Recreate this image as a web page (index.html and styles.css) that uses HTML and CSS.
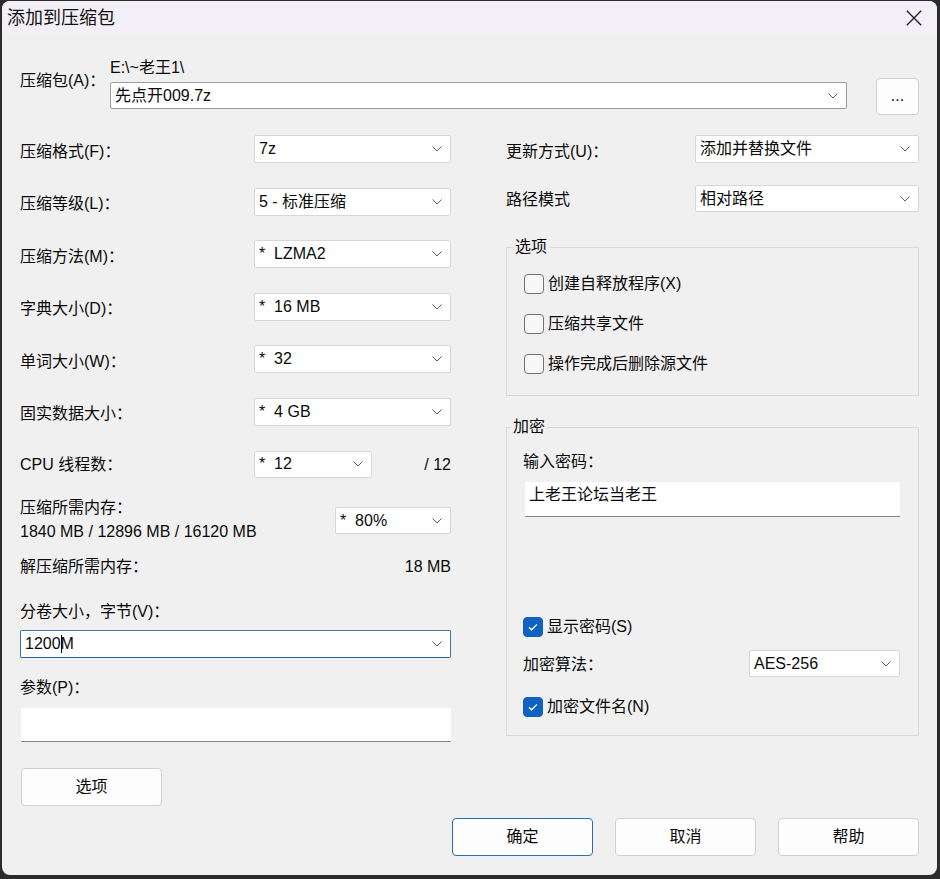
FILE: index.html
```html
<!DOCTYPE html>
<html lang="zh-CN">
<head>
<meta charset="utf-8">
<title>添加到压缩包</title>
<link rel="stylesheet" href="styles.css">
</head>
<body>
<div class="window">
  <div class="titlebar">
    <span class="title">添加到压缩包</span>
    <svg class="close" width="16" height="16" viewBox="0 0 16 16"><path d="M0.8 0.8 L15.2 15.2 M15.2 0.8 L0.8 15.2" stroke="#1a1a1a" stroke-width="1.3" fill="none"/></svg>
  </div>

  <div class="top">
    <div class="top-label">压缩包(A)：</div>
    <div class="top-main">
      <div class="path">E:\~老王1\</div>
      <div class="combo archive"><span class="val">先点开009.7z</span><svg class="chev" width="10" height="6" viewBox="0 0 10 6"><path d="M0.5 0.5 L5 5 L9.5 0.5" stroke="#5c5c5c" stroke-width="1" fill="none"/></svg></div>
    </div>
    <div class="btn browse">...</div>
  </div>

  <div class="columns">
    <div class="left">
      <div class="frow"><span class="lbl">压缩格式(F)：</span><div class="combo w197"><span class="val">7z</span><svg class="chev" width="10" height="6" viewBox="0 0 10 6"><path d="M0.5 0.5 L5 5 L9.5 0.5" stroke="#5c5c5c" stroke-width="1" fill="none"/></svg></div></div>
      <div class="frow"><span class="lbl">压缩等级(L)：</span><div class="combo w197"><span class="val">5 - 标准压缩</span><svg class="chev" width="10" height="6" viewBox="0 0 10 6"><path d="M0.5 0.5 L5 5 L9.5 0.5" stroke="#5c5c5c" stroke-width="1" fill="none"/></svg></div></div>
      <div class="frow"><span class="lbl">压缩方法(M)：</span><div class="combo w197"><span class="val">*  LZMA2</span><svg class="chev" width="10" height="6" viewBox="0 0 10 6"><path d="M0.5 0.5 L5 5 L9.5 0.5" stroke="#5c5c5c" stroke-width="1" fill="none"/></svg></div></div>
      <div class="frow"><span class="lbl">字典大小(D)：</span><div class="combo w197"><span class="val">*  16 MB</span><svg class="chev" width="10" height="6" viewBox="0 0 10 6"><path d="M0.5 0.5 L5 5 L9.5 0.5" stroke="#5c5c5c" stroke-width="1" fill="none"/></svg></div></div>
      <div class="frow"><span class="lbl">单词大小(W)：</span><div class="combo w197"><span class="val">*  32</span><svg class="chev" width="10" height="6" viewBox="0 0 10 6"><path d="M0.5 0.5 L5 5 L9.5 0.5" stroke="#5c5c5c" stroke-width="1" fill="none"/></svg></div></div>
      <div class="frow"><span class="lbl">固实数据大小：</span><div class="combo w197"><span class="val">*  4 GB</span><svg class="chev" width="10" height="6" viewBox="0 0 10 6"><path d="M0.5 0.5 L5 5 L9.5 0.5" stroke="#5c5c5c" stroke-width="1" fill="none"/></svg></div></div>
      <div class="frow cpu"><span class="lbl">CPU 线程数：</span><div class="combo w118"><span class="val">*  12</span><svg class="chev" width="10" height="6" viewBox="0 0 10 6"><path d="M0.5 0.5 L5 5 L9.5 0.5" stroke="#5c5c5c" stroke-width="1" fill="none"/></svg></div><span class="rval">/ 12</span></div>

      <div class="mem">
        <div class="mem-text">
          <div class="line">压缩所需内存：</div>
          <div class="line second">1840 MB / 12896 MB / 16120 MB</div>
        </div>
        <div class="combo w116 memcombo"><span class="val">*  80%</span><svg class="chev" width="10" height="6" viewBox="0 0 10 6"><path d="M0.5 0.5 L5 5 L9.5 0.5" stroke="#5c5c5c" stroke-width="1" fill="none"/></svg></div>
      </div>

      <div class="decomp"><span>解压缩所需内存：</span><span>18 MB</span></div>

      <div class="line vol-label">分卷大小，字节(V)：</div>
      <div class="combo focus vol"><span class="val">1200<span class="caret"></span>M</span><svg class="chev" width="10" height="6" viewBox="0 0 10 6"><path d="M0.5 0.5 L5 5 L9.5 0.5" stroke="#5c5c5c" stroke-width="1" fill="none"/></svg></div>

      <div class="line param-label">参数(P)：</div>
      <div class="textbox param"></div>

      <div class="btn opts">选项</div>
    </div>

    <div class="right">
      <div class="frow r1"><span class="rlbl">更新方式(U)：</span><div class="combo w224"><span class="val">添加并替换文件</span><svg class="chev" width="10" height="6" viewBox="0 0 10 6"><path d="M0.5 0.5 L5 5 L9.5 0.5" stroke="#5c5c5c" stroke-width="1" fill="none"/></svg></div></div>
      <div class="frow r2"><span class="rlbl">路径模式</span><div class="combo w224"><span class="val">相对路径</span><svg class="chev" width="10" height="6" viewBox="0 0 10 6"><path d="M0.5 0.5 L5 5 L9.5 0.5" stroke="#5c5c5c" stroke-width="1" fill="none"/></svg></div></div>

      <fieldset class="group options">
        <legend>选项</legend>
        <div class="gbody">
          <div class="check"><span class="box"></span><span>创建自释放程序(X)</span></div>
          <div class="check"><span class="box"></span><span>压缩共享文件</span></div>
          <div class="check"><span class="box"></span><span>操作完成后删除源文件</span></div>
        </div>
      </fieldset>

      <fieldset class="group enc">
        <legend>加密</legend>
        <div class="gbody">
          <div class="line">输入密码：</div>
          <div class="textbox pw">上老王论坛当老王</div>
          <div class="check checked showpw"><span class="box"><svg width="20" height="20" viewBox="0 0 20 20"><path d="M6 10.3 L8.6 12.8 L14 7.4" stroke="#fff" stroke-width="1.3" fill="none"/></svg></span><span>显示密码(S)</span></div>
          <div class="algo"><span class="algo-lbl">加密算法：</span><div class="combo w152"><span class="val">AES-256</span><svg class="chev" width="10" height="6" viewBox="0 0 10 6"><path d="M0.5 0.5 L5 5 L9.5 0.5" stroke="#5c5c5c" stroke-width="1" fill="none"/></svg></div></div>
          <div class="check checked encname"><span class="box"><svg width="20" height="20" viewBox="0 0 20 20"><path d="M6 10.3 L8.6 12.8 L14 7.4" stroke="#fff" stroke-width="1.3" fill="none"/></svg></span><span>加密文件名(N)</span></div>
        </div>
      </fieldset>
    </div>
  </div>

  <div class="footer">
    <div class="btn default">确定</div>
    <div class="btn">取消</div>
    <div class="btn">帮助</div>
  </div>
</div>
</body>
</html>
```

FILE: styles.css
```css
html, body {
  margin: 0;
  padding: 0;
  background: #2b2b2b;
}

body {
  font-family: "Liberation Sans", "Noto Sans CJK SC", sans-serif;
  font-size: 16px;
  color: #0a0a0a;
  line-height: 18px;
}

.window {
  margin: 1px 3px 0 2px;
  height: 874px;
  background: #f0f0f0;
  border-radius: 8px;
  overflow: hidden;
}

.titlebar {
  height: 34px;
  background: #f3eff7;
  display: flex;
  align-items: center;
  justify-content: space-between;
  padding-left: 5px;
}

.title {
  font-size: 18px;
  line-height: 22px;
  color: #111;
}

.close {
  margin-right: 15px;
}

/* top archive row */
.top {
  display: flex;
  padding: 0 18px;
  margin-top: 24px;
}

.top-label {
  width: 90px;
  padding-top: 13px;
}

.top-main {
  flex: 1;
}

.path {
  height: 18px;
}

.combo {
  box-sizing: border-box;
  height: 28px;
  background: #fff;
  border: 1px solid #d7d7d7;
  border-radius: 2px;
  display: flex;
  align-items: center;
  justify-content: space-between;
  padding: 0 8px 0 4px;
}

.combo .val {
  white-space: pre;
}

.chev {
  flex: none;
}

.archive {
  margin-top: 5px;
  height: 27px;
  border-color: #9c9c9c;
}

.btn {
  box-sizing: border-box;
  width: 141px;
  height: 38px;
  background: #fdfdfd;
  border: 1px solid #d0d0d0;
  border-radius: 4px;
  display: flex;
  align-items: center;
  justify-content: center;
}

.browse {
  width: 43px;
  height: 37px;
  margin-left: 29px;
  margin-top: 19px;
  padding-bottom: 2px;
}

/* columns */
.columns {
  display: flex;
  gap: 55px;
  padding: 0 18px;
  margin-top: 20px;
}

.left {
  width: 431px;
}

.right {
  width: 413px;
}

.frow {
  display: flex;
  align-items: center;
  height: 28px;
  margin-bottom: 24.5px;
}

.lbl {
  width: 234px;
  flex: none;
  margin-top: 5px;
}

.cpu .lbl {
  margin-top: 2px;
}

.w197 { width: 197px; }
.w118 { width: 118px; }
.w116 { width: 116px; }
.w224 { width: 224px; }
.w152 { width: 152px; }

.cpu {
  margin-bottom: 0;
}

.cpu .combo {
  height: 27px;
}

.rval {
  margin-left: auto;
  margin-top: 2px;
}

.mem {
  display: flex;
  justify-content: space-between;
  margin-top: 21px;
}

.line {
  height: 18px;
}

.mem-text .second {
  margin-top: 6px;
}

.memcombo {
  margin-top: 8px;
  height: 27px;
}

.decomp {
  display: flex;
  justify-content: space-between;
  margin-top: 17px;
}

.vol-label {
  margin-top: 27px;
}

.vol {
  margin-top: 9px;
  border-color: #3a74b8;
  border-bottom-color: #245f9f;
}

.caret {
  display: inline-block;
  width: 1px;
  height: 18px;
  background: #000;
  vertical-align: -4px;
  margin-right: -1px;
}

.param-label {
  margin-top: 21px;
}

.textbox {
  box-sizing: border-box;
  background: #fff;
  border-bottom: 1px solid #868686;
  border-radius: 2px 2px 0 0;
}

.param {
  margin-top: 11px;
  margin-left: 1px;
  height: 34px;
}

.opts {
  margin-top: 26px;
  margin-left: 1px;
}

/* right column */
.rlbl {
  width: 189px;
  flex: none;
  margin-top: 5px;
}

.r2 .rlbl {
  margin-top: 3px;
}

.r1 {
  margin-bottom: 22px;
}

.r2 {
  margin-bottom: 0;
  height: 27px;
}

.r2 .combo {
  height: 27px;
}

.group {
  margin: 0;
  padding: 0;
  border: 1px solid #dadada;
  min-width: 0;
}

.group legend {
  padding: 0 2px;
  line-height: 18px;
}

.options {
  margin-top: 26px;
}

.options legend {
  margin-left: 6px;
}

.options .gbody {
  padding: 18px 0 21px 17px;
}

.check {
  display: flex;
  align-items: center;
  gap: 4px;
  height: 20px;
}

.options .check + .check {
  margin-top: 20px;
}

.box {
  box-sizing: border-box;
  width: 20px;
  height: 20px;
  border: 1px solid #727272;
  border-radius: 4px;
  background: #f7f7f7;
  flex: none;
  display: block;
}

.box svg {
  display: block;
  margin: -1px;
}

.checked .box {
  background: #0f62c0;
  border-color: #0f62c0;
}

.enc {
  margin-top: 22px;
}

.enc legend {
  margin-left: 4px;
}

.enc .gbody {
  padding: 17px 18px 18px 16px;
}

.pw {
  margin-top: 11px;
  margin-left: 2px;
  height: 35px;
  padding: 4px 0 0 4px;
}

.showpw {
  margin-top: 100px;
}

.algo {
  display: flex;
  align-items: center;
  margin-top: 13px;
  height: 27px;
}

.algo-lbl {
  width: 226px;
  flex: none;
  margin-top: 3px;
}

.algo .combo {
  height: 27px;
}

.encname {
  margin-top: 20px;
}

/* footer */
.footer {
  display: flex;
  justify-content: flex-end;
  gap: 22px;
  padding-right: 18px;
  margin-top: 12px;
}

.default {
  border-color: #2a6db5;
}
```
